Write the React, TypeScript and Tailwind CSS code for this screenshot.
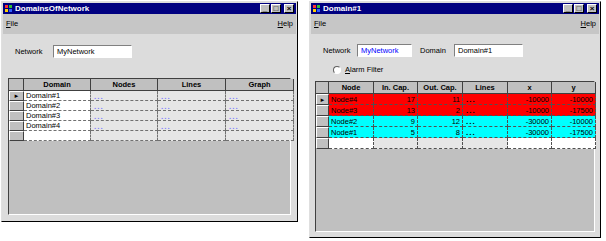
const font = { fontFamily: '"Liberation Sans", Arial, sans-serif' }

function TitleBar({ title }: { title: string }) {
  return (
    <div className="flex h-[11px] items-center bg-[#000080] pl-[2px] pr-[2px]">
      <div className="mr-[3px] grid h-[7px] w-[7px] grid-cols-2 gap-[1px]">
        <span className="bg-[#ff3030]" />
        <span className="bg-[#30c030]" />
        <span className="bg-[#ffd000]" />
        <span className="bg-[#3060ff]" />
      </div>
      <span className="whitespace-nowrap text-[8px] font-bold leading-none text-white">{title}</span>
      <div className="ml-auto flex gap-[1px]">
        {["_", "□", "×"].map((c, i) => (
          <span
            key={i}
            className={`flex h-[9px] w-[10px] items-center justify-center border border-t-white border-l-white border-r-black border-b-black bg-[#c0c0c0] text-[8px] font-bold leading-none text-black ${i === 2 ? "ml-[2px]" : ""}`}
          >
            {c}
          </span>
        ))}
      </div>
    </div>
  )
}

function MenuBar() {
  return (
    <div className="flex h-[20px] items-center justify-between bg-[#c6c6c6] px-[3px] text-[7.5px] text-black">
      <span><u>F</u>ile</span>
      <span><u>H</u>elp</span>
    </div>
  )
}

function TextBox({ value, w, blue }: { value: string; w: string; blue?: boolean }) {
  return (
    <div
      className={`flex h-[13px] items-center whitespace-nowrap border border-t-[#808080] border-l-[#808080] border-r-white border-b-white bg-white pl-[3px] text-[7.5px] ${w} ${blue ? "text-[#0000ff]" : "text-black"}`}
    >
      {value}
    </div>
  )
}

function Arrow() {
  return <span className="text-[6px] leading-none text-black">►</span>
}

const cell = "flex items-center whitespace-nowrap border-r border-b border-dashed border-r-[#707070] border-b-[#707070] h-[10px] text-[7.5px] leading-none overflow-hidden"
const head = "flex items-center justify-center whitespace-nowrap border-r border-b border-r-[#404040] border-b-[#404040] bg-[#c0c0c0] h-[12px] text-[7.5px] font-bold leading-none text-black"
const ind = "flex items-center justify-center border-r border-b border-r-[#404040] border-b-[#404040] bg-[#c0c0c0] h-[10px] border-t border-t-white border-l border-l-white"
const dots = "pl-[3px] pt-[2px] text-[8px] font-bold tracking-[1px]"

function Row({ first, h, children }: { first: boolean; h?: string; children: React.ReactNode }) {
  return (
    <>
      <div className={`${ind} ${h ?? ""}`}>{first ? <Arrow /> : null}</div>
      {children}
    </>
  )
}

function LeftWindow() {
  const rows = ["Domain#1", "Domain#2", "Domain#3", "Domain#4"]
  return (
    <div className="ml-[1px] mt-[1px] flex h-[221px] w-[297px] flex-col border border-t-[#dfdfdf] border-l-[#dfdfdf] border-r-black border-b-black bg-[#dcdcdc] p-[1px]">
      <TitleBar title="DomainsOfNetwork" />
      <MenuBar />
      <div className="flex flex-1 flex-col px-[5px] pb-[5px] pt-[11px]">
        <div className="flex items-center">
          <span className="ml-[7px] w-[38px] text-[7.5px] text-black">Network</span>
          <TextBox value="MyNetwork" w="w-[79px]" />
        </div>
        <div className="mt-[20px] flex-1 border border-t-[#404040] border-l-[#404040] border-r-white border-b-white bg-[#c0c0c0]">
          <div className="grid grid-cols-[15px_67px_67px_68px_68px]">
            <div className={head}></div>
            <div className={head}>Domain</div>
            <div className={head}>Nodes</div>
            <div className={head}>Lines</div>
            <div className={head}>Graph</div>
            {rows.map((r, i) => (
              <Row key={r} first={i === 0}>
                <div className={`${cell} bg-white pl-[2px] text-black`}>{r}</div>
                <div className={`${cell} bg-[#e6e6e6] ${dots} text-[#8080ff]`}>...</div>
                <div className={`${cell} bg-[#e6e6e6] ${dots} text-[#8080ff]`}>...</div>
                <div className={`${cell} bg-[#e6e6e6] ${dots} text-[#8080ff]`}>...</div>
              </Row>
            ))}
            <div className={ind}></div>
            <div className={`${cell} bg-white`}></div>
            <div className={`${cell} bg-[#e6e6e6]`}></div>
            <div className={`${cell} bg-[#e6e6e6]`}></div>
            <div className={`${cell} bg-[#e6e6e6]`}></div>
          </div>
        </div>
      </div>
    </div>
  )
}

function RightWindow() {
  const rows = [
    ["Node#4", "17", "11", "-10000", "-10000", "bg-[#ff0000]"],
    ["Node#3", "13", "2", "-10000", "-17500", "bg-[#ff0000]"],
    ["Node#2", "9", "12", "-30000", "-10000", "bg-[#00ffff]"],
    ["Node#1", "5", "8", "-30000", "-17500", "bg-[#00ffff]"],
  ]
  const c2 = "flex items-center whitespace-nowrap border-r border-b border-dashed border-r-[#505050] border-b-[#505050] h-[11px] text-[7.5px] leading-none overflow-hidden text-black"
  return (
    <div className="ml-[11px] mt-[1px] flex h-[237px] w-[292px] flex-col border border-t-[#dfdfdf] border-l-[#dfdfdf] border-r-black border-b-black bg-[#dcdcdc] p-[1px]">
      <TitleBar title="Domain#1" />
      <MenuBar />
      <div className="flex flex-1 flex-col px-[4px] pb-[4px] pt-[10px]">
        <div className="flex items-center">
          <span className="ml-[8px] w-[34px] text-[7.5px] text-black">Network</span>
          <TextBox value="MyNetwork" w="w-[55px]" blue />
          <span className="ml-[8px] w-[34px] text-[7.5px] text-black">Domain</span>
          <TextBox value="Domain#1" w="w-[69px]" />
        </div>
        <div className="mt-[7px] flex items-center pl-[18px] text-[7.5px] text-black">
          <span className="mr-[4px] h-[8px] w-[8px] rounded-full border border-t-[#606060] border-l-[#606060] border-r-white border-b-white bg-white" />
          <span><u>A</u>larm Filter</span>
        </div>
        <div className="mt-[6px] flex-1 border border-t-[#404040] border-l-[#404040] border-r-white border-b-white bg-[#c0c0c0]">
          <div className="grid grid-cols-[13px_45px_44px_45px_45px_44px_44px]">
            <div className={head}></div>
            {["Node", "In. Cap.", "Out. Cap.", "Lines", "x", "y"].map((h) => (
              <div key={h} className={head}>{h}</div>
            ))}
            {rows.map((r, i) => (
              <Row key={r[0]} first={i === 0} h="h-[11px]">
                <div className={`${c2} ${r[5]} pl-[2px]`}>{r[0]}</div>
                <div className={`${c2} ${r[5]} justify-end pr-[2px]`}>{r[1]}</div>
                <div className={`${c2} ${r[5]} justify-end pr-[2px]`}>{r[2]}</div>
                <div className={`${c2} ${r[5]} ${dots} text-[#4040ff]`}>...</div>
                <div className={`${c2} ${r[5]} justify-end pr-[2px]`}>{r[3]}</div>
                <div className={`${c2} ${r[5]} justify-end pr-[2px]`}>{r[4]}</div>
              </Row>
            ))}
            <div className={`${ind} h-[11px]`}></div>
            <div className={`${c2} bg-white`}></div>
            <div className={`${c2} bg-[#e6e6e6]`}></div>
            <div className={`${c2} bg-[#e6e6e6]`}></div>
            <div className={`${c2} bg-[#e6e6e6]`}></div>
            <div className={`${c2} bg-white`}></div>
            <div className={`${c2} bg-white`}></div>
          </div>
        </div>
      </div>
    </div>
  )
}

export default function App() {
  return (
    <div className="flex h-[241px] w-[606px] items-start bg-white" style={font}>
      <LeftWindow />
      <RightWindow />
    </div>
  )
}
